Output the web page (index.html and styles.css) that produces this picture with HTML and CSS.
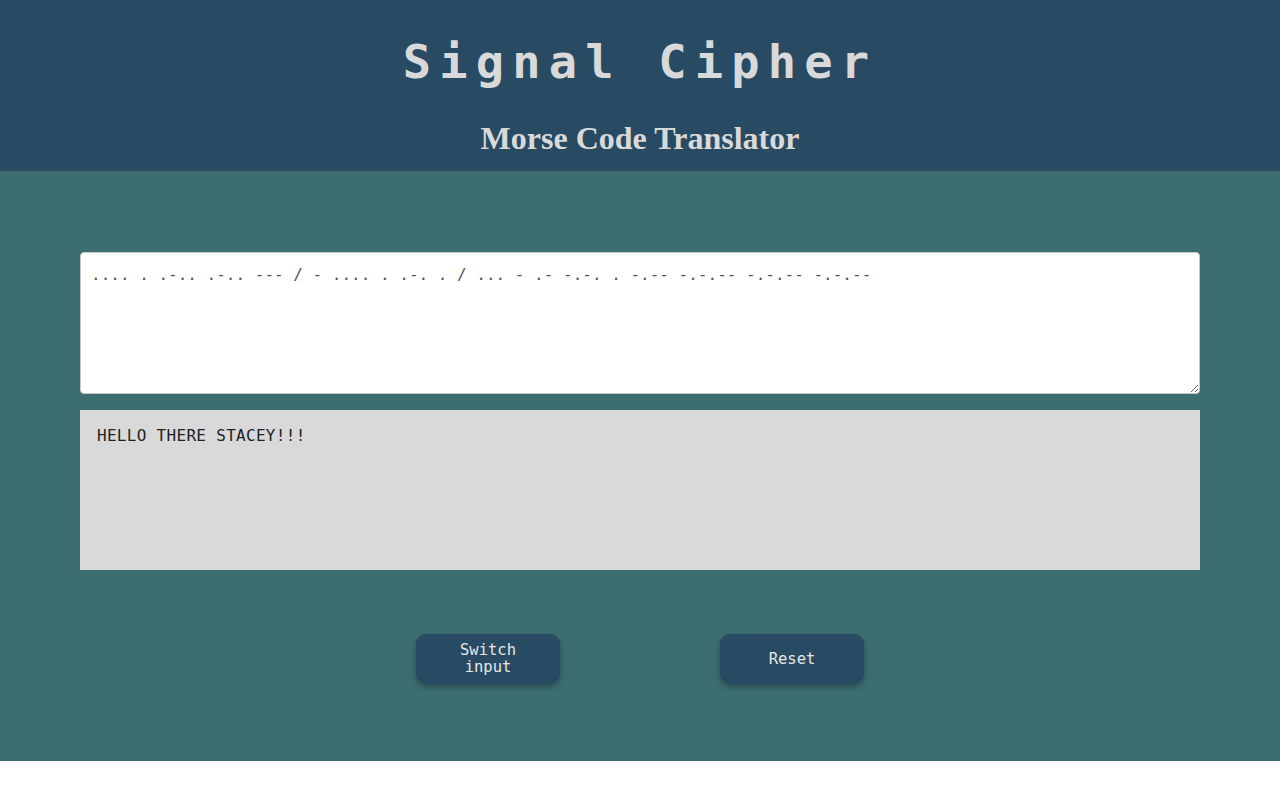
FILE: index.html
```html
<!DOCTYPE html>
<html lang="en">
<head>
<meta charset="utf-8">
<title>Signal Cipher</title>
<link rel="stylesheet" href="styles.css">
</head>
<body>
<header class="header">
  <h1 class="title">Signal Cipher</h1>
  <h2 class="subtitle">Morse Code Translator</h2>
</header>
<main class="main">
  <textarea class="input" spellcheck="false">.... . .-.. .-.. --- / - .... . .-. . / ... - .- -.-. . -.-- -.-.-- -.-.-- -.-.--</textarea>
  <div class="output">HELLO THERE STACEY!!!</div>
  <div class="actions">
    <button class="btn">Switch input</button>
    <button class="btn">Reset</button>
  </div>
</main>
</body>
</html>
```
FILE: styles.css
```css
html, body {
  margin: 0;
  padding: 0;
  background: #ffffff;
}
body {
  font-family: "DejaVu Sans Mono", monospace;
}
.header {
  background: #284b63;
  padding: 34px 0 15px;
  text-align: center;
}
.title {
  margin: 0;
  font-family: "DejaVu Sans Mono", monospace;
  font-weight: bold;
  font-size: 47px;
  line-height: 56px;
  letter-spacing: 8.2px;
  color: #d9d9d9;
}
.subtitle {
  margin: 31px 0 0;
  font-family: "Liberation Serif", "Times New Roman", serif;
  font-weight: bold;
  font-size: 32px;
  line-height: 35px;
  color: #d9d9d9;
}
.main {
  background: #3c6e71;
  padding: 81px 80px 77px;
  display: flex;
  flex-direction: column;
}
.input {
  box-sizing: border-box;
  display: block;
  width: 100%;
  height: 142px;
  margin: 0;
  padding: 12px 10px 8px;
  border: 1px solid #c8c8c8;
  border-radius: 4px;
  background: #ffffff;
  color: #555555;
  font-family: "DejaVu Sans Mono", monospace;
  font-size: 16px;
  line-height: 19px;
  resize: vertical;
  outline: none;
}
.output {
  box-sizing: border-box;
  margin-top: 16px;
  height: 160px;
  padding: 16px 17px;
  background: #d9d9d9;
  color: #222222;
  font-size: 16px;
  letter-spacing: 0.3px;
  line-height: 19px;
}
.actions {
  margin-top: 64px;
  display: flex;
  justify-content: center;
  gap: 160px;
}
.btn {
  width: 144px;
  height: 50px;
  padding: 0 20px;
  border: none;
  border-radius: 10px;
  background: #284b63;
  color: #e6e6e6;
  font-family: "DejaVu Sans Mono", monospace;
  font-size: 15.5px;
  line-height: 17px;
  box-shadow: 0 3px 6px rgba(0, 0, 0, 0.3);
  cursor: pointer;
}
```
